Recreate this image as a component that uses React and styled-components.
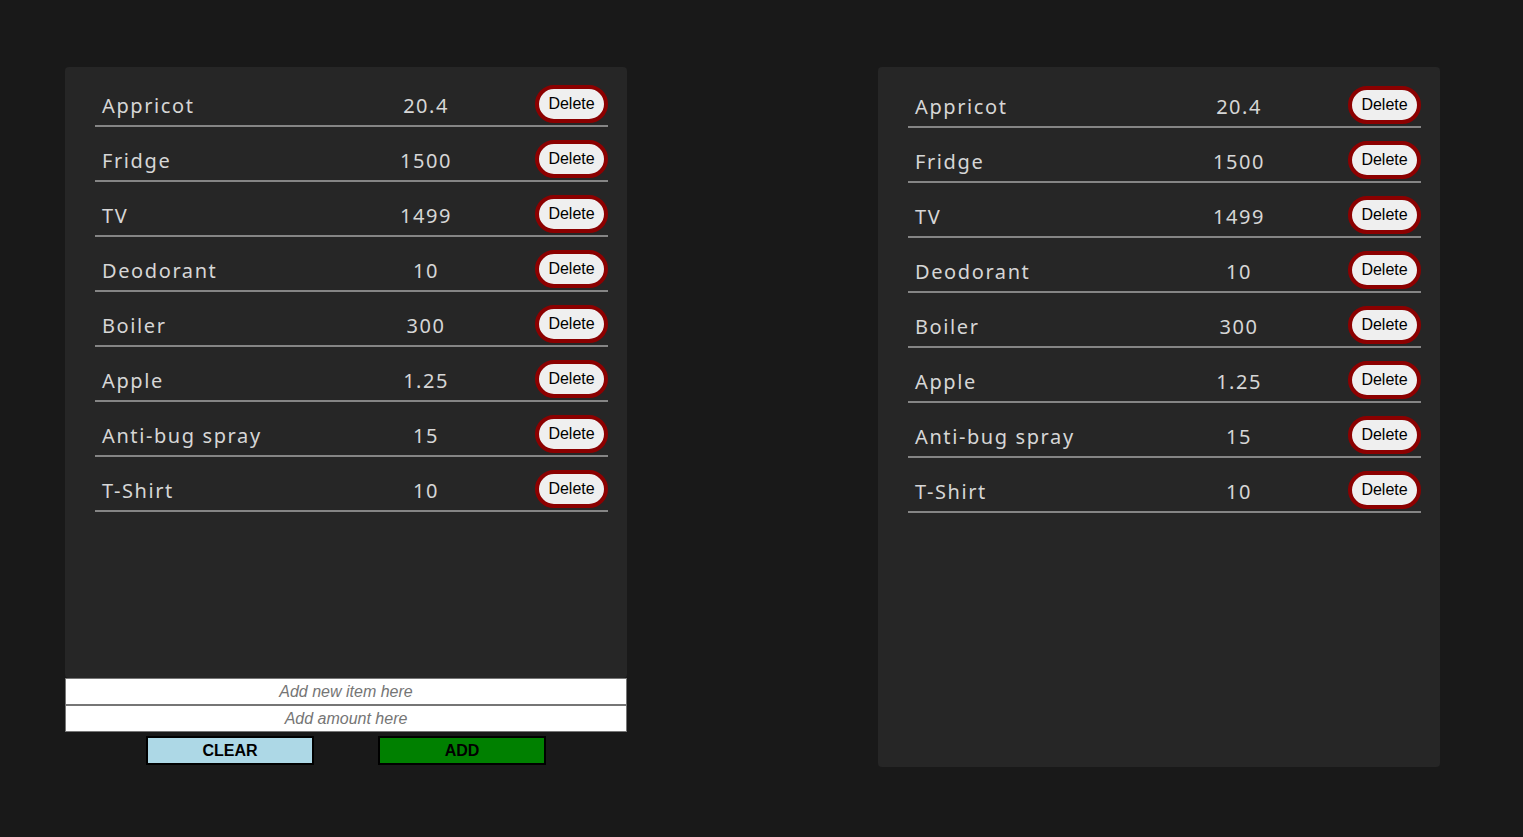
import React, { useState } from 'react';
import styled, { createGlobalStyle } from 'styled-components';

const GlobalStyle = createGlobalStyle`
  body {
    margin: 0;
    background: #191919;
    font-family: 'Noto Sans', 'Open Sans', sans-serif;
  }
`;

const Page = styled.div`
  display: flex;
  align-items: flex-start;
  gap: 251px;
  padding: 67px 0 0 65px;
  min-height: 837px;
  box-sizing: border-box;
`;

const Column = styled.div`
  display: flex;
  flex-direction: column;
  width: 562px;
`;

const Panel = styled.div`
  background: #262626;
  border-radius: 4px;
  height: ${props => props.tall ? '700px' : '611px'};
  padding: ${props => props.tall ? '6px' : '5px'} 19px 0 30px;
  box-sizing: border-box;
`;

const Row = styled.div`
  display: grid;
  grid-template-columns: 290px 82px 1fr;
  align-items: center;
  padding: 13px 0 2px;
  border-bottom: 2px solid #858585;
`;

const Name = styled.span`
  padding: 3px 0 0 7px;
  font-size: 20px;
  letter-spacing: 1.6px;
  color: #d6d6d6;
`;

const Amount = styled.span`
  padding-top: 3px;
  text-align: center;
  font-size: 20px;
  letter-spacing: 1.5px;
  color: #d6d6d6;
`;

const DeleteButton = styled.button`
  justify-self: end;
  width: 73px;
  height: 38px;
  border: 4px solid #8b0000;
  border-radius: 20px;
  background: #efefef;
  color: #000;
  font-family: 'Liberation Sans', Arial, sans-serif;
  font-size: 16px;
  padding: 0;
  cursor: pointer;
`;

const Form = styled.div`
  display: flex;
  flex-direction: column;
`;

const Input = styled.input`
  width: 100%;
  height: 27px;
  box-sizing: border-box;
  border: 1px solid #767676;
  background: #fff;
  text-align: center;
  font-family: 'Liberation Sans', Arial, sans-serif;
  font-size: 16px;
  padding: 0;
  margin: 0;

  &::placeholder {
    color: #757575;
    font-style: italic;
  }
`;

const Actions = styled.div`
  display: flex;
  justify-content: center;
  gap: 64px;
  margin-top: 4px;
`;

const ActionButton = styled.button`
  width: 168px;
  height: 29px;
  border: 2px solid #000;
  background: ${props => props.bg};
  color: #000;
  font-family: 'Liberation Sans', Arial, sans-serif;
  font-weight: bold;
  font-size: 16px;
  padding: 0;
  cursor: pointer;
`;

const initialItems = [
  { name: 'Appricot', amount: '20.4' },
  { name: 'Fridge', amount: '1500' },
  { name: 'TV', amount: '1499' },
  { name: 'Deodorant', amount: '10' },
  { name: 'Boiler', amount: '300' },
  { name: 'Apple', amount: '1.25' },
  { name: 'Anti-bug spray', amount: '15' },
  { name: 'T-Shirt', amount: '10' },
];

const ItemList = ({ items, onDelete, tall }) => (
  <Panel tall={tall}>
    {items.map((item, index) => (
      <Row key={index}>
        <Name>{item.name}</Name>
        <Amount>{item.amount}</Amount>
        <DeleteButton onClick={() => onDelete(index)}>Delete</DeleteButton>
      </Row>
    ))}
  </Panel>
);

const App = () => {
  const [items, setItems] = useState(initialItems);
  const [name, setName] = useState('');
  const [amount, setAmount] = useState('');

  const handleDelete = index => setItems(items.filter((_, i) => i !== index));
  const handleAdd = () => {
    if (!name) return;
    setItems([...items, { name, amount }]);
    setName('');
    setAmount('');
  };

  return (
    <>
      <GlobalStyle />
      <Page>
        <Column>
          <ItemList items={items} onDelete={handleDelete} />
          <Form>
            <Input placeholder="Add new item here" value={name} onChange={e => setName(e.target.value)} />
            <Input placeholder="Add amount here" value={amount} onChange={e => setAmount(e.target.value)} />
            <Actions>
              <ActionButton bg="#add8e6" onClick={() => { setName(''); setAmount(''); }}>CLEAR</ActionButton>
              <ActionButton bg="#008000" onClick={handleAdd}>ADD</ActionButton>
            </Actions>
          </Form>
        </Column>
        <Column>
          <ItemList items={items} onDelete={handleDelete} tall />
        </Column>
      </Page>
    </>
  );
};

export default App;
